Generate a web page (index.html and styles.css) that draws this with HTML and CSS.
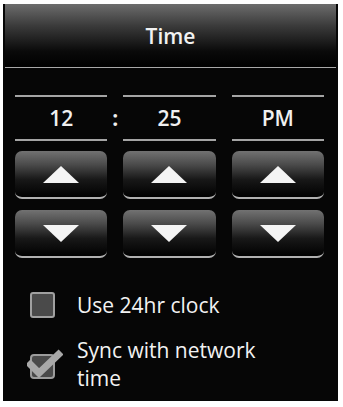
FILE: index.html
```html
<!DOCTYPE html>
<html lang="en">
<head>
    <meta charset="UTF-8">
    <meta name="viewport" content="width=device-width, initial-scale=1.0">
    <title>Time</title>
    <link rel="stylesheet" href="styles.css">
</head>
<body>

<div class="device">
    <div class="title-bar">
        <h1 class="title">Time</h1>
    </div>

    <div class="picker">
        <div class="col">
            <div class="field">12</div>
            <button class="spin up"><svg width="36" height="17" viewBox="0 0 36 17"><polygon points="18,0 36,17 0,17"/></svg></button>
            <button class="spin down"><svg width="36" height="17" viewBox="0 0 36 17"><polygon points="0,0 36,0 18,17"/></svg></button>
        </div>
        <div class="sep"><span class="colon">:</span></div>
        <div class="col">
            <div class="field">25</div>
            <button class="spin up"><svg width="36" height="17" viewBox="0 0 36 17"><polygon points="18,0 36,17 0,17"/></svg></button>
            <button class="spin down"><svg width="36" height="17" viewBox="0 0 36 17"><polygon points="0,0 36,0 18,17"/></svg></button>
        </div>
        <div class="sep"></div>
        <div class="col">
            <div class="field">PM</div>
            <button class="spin up"><svg width="36" height="17" viewBox="0 0 36 17"><polygon points="18,0 36,17 0,17"/></svg></button>
            <button class="spin down"><svg width="36" height="17" viewBox="0 0 36 17"><polygon points="0,0 36,0 18,17"/></svg></button>
        </div>
    </div>

    <div class="options">
        <div class="option">
            <span class="box"></span>
            <span class="option-text">Use 24hr clock</span>
        </div>
        <div class="option checked">
            <svg class="check" width="36" height="34" viewBox="0 0 36 34">
                <rect x="4" y="8" width="23" height="23" rx="3" fill="#4a4a4a" stroke="#9c9c9c" stroke-width="2"/>
                <path d="M1 15 L12 26 L34 5" fill="none" stroke="#a8a8a8" stroke-width="7"/>
            </svg>
            <span class="option-text">Sync with network<br>time</span>
        </div>
    </div>
</div>

</body>
</html>
```

FILE: styles.css
```css
* {
    box-sizing: border-box;
}

body {
    margin: 0;
    background-color: #fff;
    font-family: "Open Sans", "DejaVu Sans", sans-serif;
}

.device {
    margin: 4px 0 0 3px;
    width: 335px;
    height: 397px;
    background-color: #060606;
    color: #ececec;
}

/* Başlık */
.title-bar {
    height: 64px;
    margin: 0 2px;
    background: linear-gradient(#6c6c6c, #3a3a3a 35%, #0a0a0a 75%, #000);
    border-bottom: 1px solid #a8a8a8;
    display: flex;
    align-items: center;
    justify-content: center;
}

.title {
    margin: 0;
    font-size: 21px;
    font-weight: 600;
    color: #f2f2f2;
}

/* Saat seçici */
.picker {
    display: flex;
    margin-top: 27px;
    padding: 0 14px 0 12px;
}

.col {
    flex: 1;
    display: flex;
    flex-direction: column;
}

.sep {
    width: 16px;
    height: 46px;
    display: flex;
    align-items: center;
    justify-content: center;
}

.colon {
    font-size: 21px;
    font-weight: 700;
    color: #eee;
}

.field {
    height: 46px;
    border-top: 2px solid #a4a4a4;
    border-bottom: 2px solid #a4a4a4;
    display: flex;
    align-items: center;
    justify-content: center;
    font-size: 21px;
    font-weight: 600;
    color: #f0f0f0;
}

.spin {
    height: 48px;
    margin-top: 10px;
    padding: 0;
    border: none;
    border-bottom: 2px solid #b0b0b0;
    border-radius: 7px;
    background: linear-gradient(#727272, #4a4a4a 30%, #181818 62%, #000);
    display: flex;
    align-items: center;
    justify-content: center;
    cursor: pointer;
}

.spin.down {
    margin-top: 11px;
}

.spin svg {
    fill: #f4f4f4;
}

/* Seçenekler */
.options {
    margin-top: 33px;
    padding-left: 24px;
    display: flex;
    flex-direction: column;
    gap: 17px;
}

.option {
    display: flex;
    align-items: center;
    font-size: 21px;
    line-height: 28px;
    color: #f2f2f2;
}

.box {
    width: 25px;
    height: 26px;
    margin-left: 3px;
    margin-right: 22px;
    border: 2px solid #a0a0a0;
    border-radius: 3px;
    background-color: #4a4a4a;
}

.check {
    margin-right: 14px;
}
```
